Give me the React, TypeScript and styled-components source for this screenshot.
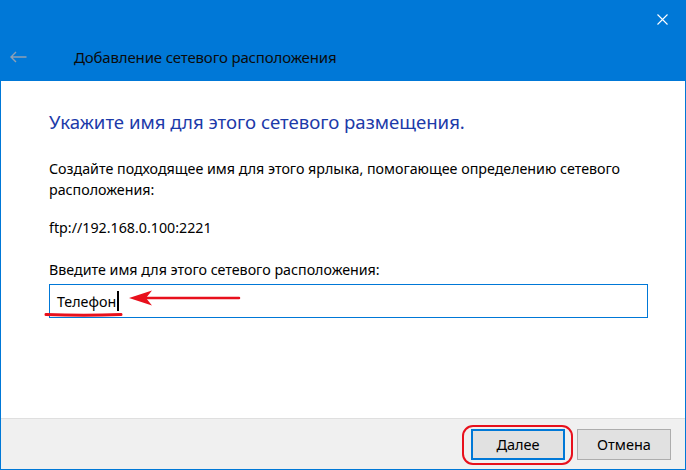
import React from "react";
import styled, { createGlobalStyle } from "styled-components";

const GlobalStyle = createGlobalStyle`
  html, body {
    margin: 0;
    padding: 0;
    background: #ffffff;
  }
  * {
    box-sizing: border-box;
  }
`;

const Window = styled.div`
  display: flex;
  flex-direction: column;
  width: 686px;
  height: 470px;
  border: 1px solid #0078d7;
  border-top: none;
  background: #ffffff;
  font-family: "Noto Sans", "Open Sans", sans-serif;
  overflow: hidden;
`;

const Header = styled.div`
  display: flex;
  flex-direction: column;
  height: 81px;
  background: #0078d7;
  margin: 0 -1px;
`;

const TopRow = styled.div`
  display: flex;
  justify-content: flex-end;
  height: 38px;
`;

const CloseButton = styled.div`
  display: flex;
  align-items: center;
  justify-content: center;
  width: 46px;
  height: 38px;
  margin-right: 1px;
`;

const TitleRow = styled.div`
  display: flex;
  align-items: center;
  height: 38px;
  padding-left: 10px;
`;

const BackArrow = styled.div`
  display: flex;
  align-items: center;
  width: 64px;
`;

const Title = styled.div`
  font-family: "Noto Sans", sans-serif;
  font-size: 15px;
  color: #0b0b0b;
  letter-spacing: -0.15px;
`;

const Content = styled.div`
  flex: 1;
  display: flex;
  flex-direction: column;
  padding: 29px 38px 0 48px;
`;

const Heading = styled.h1`
  margin: 0;
  font-family: "Noto Sans", sans-serif;
  font-weight: 400;
  font-size: 18.6px;
  line-height: 24px;
  color: #1c3aa9;
`;

const Text = styled.p<{ $gap?: number }>`
  margin: ${(p) => p.$gap ?? 0}px 0 0;
  font-size: 14.25px;
  line-height: 21px;
  color: #000000;
`;

const Field = styled.div`
  position: relative;
  margin-top: 4px;
  width: 599px;
  height: 34px;
  border: 1px solid #0078d7;
  display: flex;
  align-items: center;
  padding-left: 7px;
  font-size: 14.25px;
  color: #000;
`;

const Caret = styled.span`
  display: inline-block;
  width: 2px;
  height: 20px;
  background: #000;
  margin-left: 1px;
`;

const Annotation = styled.svg`
  position: absolute;
  left: -6px;
  top: 0;
  overflow: visible;
  pointer-events: none;
`;

const Footer = styled.div`
  display: flex;
  justify-content: flex-end;
  align-items: center;
  gap: 12px;
  height: 51px;
  background: #f0f0f0;
  border-top: 1px solid #dfdfdf;
  padding-right: 14px;
`;

const Button = styled.button<{ $primary?: boolean }>`
  position: relative;
  width: 94px;
  height: 31px;
  background: #e1e1e1;
  border: ${(p) => (p.$primary ? "2px solid #0078d7" : "1px solid #adadad")};
  font-family: "Noto Sans", sans-serif;
  font-size: 14.5px;
  color: #000;
  padding: 0;
`;

const Highlight = styled.span`
  position: absolute;
  left: -11px;
  right: -10px;
  top: -6px;
  bottom: -7px;
  border: 2.5px solid #e8101c;
  border-radius: 11px;
  pointer-events: none;
`;

export default function App() {
  return (
    <>
      <GlobalStyle />
      <Window>
        <Header>
          <TopRow>
            <CloseButton>
              <svg width="11" height="11" viewBox="0 0 11 11">
                <path d="M0.5 0.5 L10.5 10.5 M10.5 0.5 L0.5 10.5" stroke="#ffffff" strokeWidth="1.1" />
              </svg>
            </CloseButton>
          </TopRow>
          <TitleRow>
            <BackArrow>
              <svg width="17" height="12" viewBox="0 0 17 12">
                <path d="M1 6 H16.5 M6 1 L1 6 L6 11" stroke="#8fa0b4" strokeWidth="1.4" fill="none" />
              </svg>
            </BackArrow>
            <Title>Добавление сетевого расположения</Title>
          </TitleRow>
        </Header>
        <Content>
          <Heading>Укажите имя для этого сетевого размещения.</Heading>
          <Text $gap={24}>
            Создайте подходящее имя для этого ярлыка, помогающее определению сетевого
            <br />
            расположения:
          </Text>
          <Text $gap={17}>ftp://192.168.0.100:2221</Text>
          <Text $gap={21}>Введите имя для этого сетевого расположения:</Text>
          <Field>
            Телефон
            <Caret />
            <Annotation width="200" height="34">
              <path d="M2 29.5 Q40 31 77 29.5" stroke="#e8101c" strokeWidth="3" fill="none" strokeLinecap="round" />
              <path d="M100 13 H195" stroke="#e8101c" strokeWidth="2.5" strokeLinecap="round" />
              <path d="M85 13 L108 5.5 L102 13 L108 20.5 Z" fill="#e8101c" />
            </Annotation>
          </Field>
        </Content>
        <Footer>
          <Button $primary>
            Далее
            <Highlight />
          </Button>
          <Button>Отмена</Button>
        </Footer>
      </Window>
    </>
  );
}
